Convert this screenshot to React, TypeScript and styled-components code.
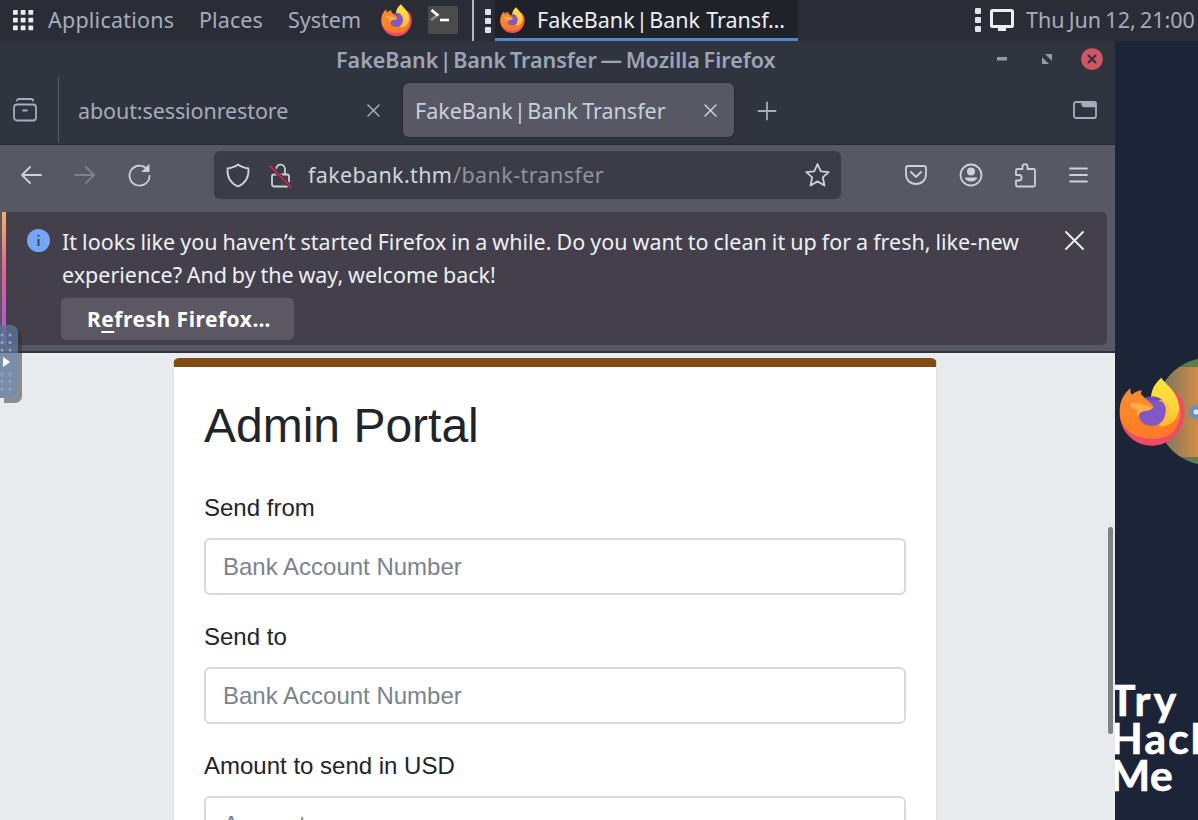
import React from "react";
import styled, { createGlobalStyle } from "styled-components";

const GlobalStyle = createGlobalStyle`
  * { box-sizing: border-box; }
  body { margin: 0; background: #1c2438; overflow: hidden; }
  svg { display: block; flex: none; overflow: visible; }
`;

const Screen = styled.div`
  width: 1198px;
  height: 820px;
  overflow: hidden;
  display: flex;
  flex-direction: column;
  position: relative;
  background: #1c2438;
  font-family: "Noto Sans", "Open Sans", sans-serif;
  font-size: 21.5px;
  color: #a4aebc;
`;

const Label = styled.span<{ $width: number; $spacing?: number; $word?: number }>`
  display: block;
  flex: none;
  width: ${(p) => p.$width}px;
  letter-spacing: ${(p) => p.$spacing ?? 0}px;
  word-spacing: ${(p) => p.$word ?? 0}px;
  line-height: 32px;
  white-space: pre;
`;

const Pipe = styled.span`
  word-spacing: -4.2px;
`;

/* ---------- Desktop panel ---------- */

const Panel = styled.header`
  height: 41px;
  flex: none;
  display: flex;
  align-items: center;
  background: #2b2d36;
  padding-left: 13px;
`;

const Menus = styled.nav`
  display: flex;
  gap: 25px;
  margin: -2px 0 0 15px;
`;

const Launchers = styled.div`
  display: flex;
  align-items: center;
  gap: 16px;
  margin-left: 21px;
`;

const Separator = styled.i`
  width: 2px;
  height: 41px;
  margin: 0 11px 0 14px;
  background: #b3b8c2;
`;

const Grip = styled.div`
  display: flex;
  flex-direction: column;
  gap: 3px;
  i { width: 6px; height: 6px; background: #dfe2e8; border-radius: 1px; }
`;

const TaskButton = styled.div`
  width: 303px;
  height: 41px;
  margin-left: 4px;
  padding: 2px 0 0 5px;
  display: flex;
  align-items: center;
  gap: 12px;
  background: #20222a;
  border-bottom: 3px solid #5088cc;
  color: #eceff3;
`;

const Tray = styled.div`
  margin: -1px 0 0 auto;
  display: flex;
  align-items: center;
  padding-right: 3px;
  svg { margin: 0 12px 0 9px; }
`;

/* ---------- Browser window ---------- */

const Workspace = styled.div`
  flex: 1;
  display: flex;
  min-height: 0;
`;

const Window = styled.section`
  width: 1115px;
  flex: none;
  display: flex;
  flex-direction: column;
  background: #30343f;
  position: relative;
  z-index: 1;
`;

const TitleBar = styled.div`
  height: 36px;
  flex: none;
  display: flex;
  align-items: center;
  padding: 2px 12px 0 336px;
  font-weight: 600;
  color: #9ba6b5;
`;

const WindowButtons = styled.div`
  margin: -2px 0 0 auto;
  display: flex;
  align-items: center;
`;

const TabStrip = styled.div`
  height: 68px;
  flex: none;
  display: flex;
  align-items: center;
  padding: 0 18px 1px 0;
  border-bottom: 1px solid #282b34;
`;

const TabMenu = styled.div`
  width: 59px;
  height: 66px;
  padding-left: 13px;
  display: flex;
  align-items: center;
  border-right: 1px solid #555964;
`;

const Tab = styled.div<{ $active?: boolean }>`
  height: 54px;
  width: ${(p) => (p.$active ? 331 : 336)}px;
  margin-left: ${(p) => (p.$active ? 2 : 6)}px;
  padding: 1px ${(p) => (p.$active ? 17 : 21)}px 0 ${(p) => (p.$active ? 12 : 13)}px;
  display: flex;
  align-items: center;
  justify-content: space-between;
  border-radius: 6px;
  background: ${(p) => (p.$active ? "#575864" : "transparent")};
  color: ${(p) => (p.$active ? "#c7d0dd" : "#a3adbb")};
  box-shadow: ${(p) => (p.$active ? "0 0 3px rgba(15,17,24,.45)" : "none")};
`;

const NewTab = styled.div`
  margin: 1px auto 0 24px;
`;

const NavBar = styled.div`
  height: 67px;
  flex: none;
  display: flex;
  align-items: center;
  padding: 0 27px 7px 20px;
  background: #575864;
  color: #ccd0d9;
`;

const NavButtons = styled.div`
  display: flex;
  align-items: center;
  gap: 32px;
`;

const AddressBar = styled.div`
  width: 627px;
  height: 48px;
  margin: 0 64px 0 63px;
  padding: 0 11px 0 12px;
  display: flex;
  align-items: center;
  border-radius: 6px;
  background: #3a3d46;
`;

const Url = styled.div`
  display: flex;
  margin: 0 auto 0 17px;
  color: #d0d5dc;
  span + span { color: #8f939b; }
`;

const NoticeArea = styled.div`
  height: 141px;
  flex: none;
  display: flex;
  padding: 0 8px 6px 2px;
  background: #575864;
  border-bottom: 2px solid #30333e;
`;

const Accent = styled.i`
  width: 4px;
  background: linear-gradient(#f5b25c, #e85f92 45%, #b455d8 90%);
`;

const Notice = styled.div`
  flex: 1;
  display: flex;
  align-items: flex-start;
  padding: 13px 23px 0 21px;
  border-radius: 0 5px 5px 0;
  background: #43404b;
  color: #edf0f3;
`;

const NoticeBody = styled.div`
  flex: 1;
  margin-left: 12px;
  ${Label} { line-height: 33px; }
`;

const RefreshButton = styled.button`
  display: block;
  width: 233px;
  height: 42px;
  margin: 7px 0 0 -1px;
  padding: 1px 0 0 26px;
  border: 0;
  border-radius: 5px;
  background: #5b5863;
  color: #fff;
  font: 700 21px "Noto Sans", sans-serif;
  text-align: left;
  u { text-decoration-thickness: 2px; text-underline-offset: 4px; }
`;

/* ---------- Bank page ---------- */

const Page = styled.main`
  flex: 1;
  min-height: 0;
  padding: 5px 0 0 173px;
  background: #e8ebee;
  overflow: hidden;
  position: relative;
`;

const Card = styled.section`
  width: 764px;
  height: 600px;
  padding: 0 30px;
  border: 1px solid #dddfe2;
  border-top: 9px solid #834b14;
  border-radius: 6px;
  background: #fff;
  font-family: "Liberation Sans", Arial, sans-serif;
  color: #212529;
`;

const Heading = styled.h1`
  margin: 30px 0 0;
  font-size: 48px;
  font-weight: 400;
  line-height: 58px;
`;

const Form = styled.form`
  margin-top: 35px;
  display: flex;
  flex-direction: column;
  gap: 24px;
`;

const Field = styled.label`
  display: flex;
  flex-direction: column;
  font-size: 24px;
  line-height: 36px;
  gap: 12px;
`;

const Input = styled.input`
  height: 57px;
  padding: 0 17px;
  border: 2px solid #d6dade;
  border-radius: 6px;
  background: #fff;
  font: 24px "Liberation Sans", Arial, sans-serif;
  &::placeholder { color: #7b838b; opacity: 1; }
`;

const ScrollThumb = styled.i`
  position: absolute;
  left: 1108px;
  top: 174px;
  width: 5px;
  height: 207px;
  border-radius: 3px;
  background: #7f8384;
`;

const SideHandle = styled.div`
  position: absolute;
  z-index: 3;
  left: 0;
  top: 325px;
  width: 18px;
  height: 73px;
  border-radius: 0 7px 7px 0;
  background: rgba(91, 115, 150, 0.78);
  box-shadow: 4px 5px 0 rgba(45, 45, 48, 0.5);
`;

/* ---------- Wallpaper ---------- */

const Desktop = styled.aside`
  flex: 1;
  position: relative;
`;

const Emblem = styled.div<{ $top: number }>`
  position: absolute;
  left: 4px;
  top: ${(p) => p.$top}px;
`;

const Wordmark = styled.div`
  position: absolute;
  left: -5px;
  top: 640px;
  font: 700 42.5px/37.5px "Lato", sans-serif;
  -webkit-text-stroke: 0.7px #fff;
  color: #fff;
`;

const WordLine = styled.div<{ $spacing: number }>`
  letter-spacing: ${(p) => p.$spacing}px;
  white-space: pre;
`;

function Firefox({ size }: { size: number }) {
  const id = `ff${size}`;
  return (
    <svg width={size} height={size * 1.05} viewBox="0 0 200 210">
      <defs>
        <linearGradient id={`${id}a`} x1="0" y1="0" x2="0.3" y2="1">
          <stop offset="0" stopColor="#f58a3c" />
          <stop offset=".6" stopColor="#ff8420" />
          <stop offset="1" stopColor="#ff7a26" />
        </linearGradient>
        <linearGradient id={`${id}b`} x1="0" y1="0" x2="0" y2="1">
          <stop offset="0" stopColor="#fbe33c" />
          <stop offset=".6" stopColor="#fdd53a" />
          <stop offset="1" stopColor="#ffb52d" />
        </linearGradient>
      </defs>
      <path d="M170 45C190 55 200 85 198 110C195 165 155 208 100 208C45 208 5 165 2 115Z" fill="#ef4a67" />
      <path d="M35 33C33 44 35 48 39 54C48 46 57 41 69 40C65 49 66 57 70 64L170 60C192 90 190 125 172 155C155 180 128 188 96 187C40 185 4 155 2 107C1 74 14 51 35 33Z" fill={`url(#${id}a)`} />
      <path d="M128 2C145 25 182 50 182 92C181 129 158 151 124 150L96 70C98 33 111 18 128 2Z" fill={`url(#${id}b)`} />
      <path d="M64 80C76 60 115 50 133 73C149 95 142 130 122 142C100 155 69 147 60 122Z" fill="#8059c7" />
      <path d="M76 66C92 55 120 56 139 78C124 72 114 71 104 73Z" fill="#7249bc" />
      <path d="M118 70C145 78 153 105 139 130C157 112 157 88 143 77C135 70 126 69 118 70Z" fill="#ffbd42" />
      <path d="M64 50L100 83L104 91C94 106 80 99 69 106C61 109 59 118 61 126C49 115 46 96 46 88L42 60Z" fill="#ff8a2a" />
      <path d="M33 82C52 76 74 84 88 88C93 90 98 91 104 91C94 106 80 99 69 106C61 109 59 113 59 119C52 110 53 101 56 97C45 99 36 93 33 82Z" fill="#ffae4a" />
    </svg>
  );
}

function Close({ size, width = 1.5 }: { size: number; width?: number }) {
  return (
    <svg width={size} height={size} viewBox={`0 0 ${size} ${size}`} stroke="currentColor" strokeWidth={width} strokeLinecap="round">
      <path d={`M1 1L${size - 1} ${size - 1}M${size - 1} 1L1 ${size - 1}`} />
    </svg>
  );
}

const line = { fill: "none", stroke: "currentColor", strokeWidth: 1.8, strokeLinecap: "round", strokeLinejoin: "round" } as const;

const Dots = () => (
  <Grip><i /><i /><i /></Grip>
);

export default function App() {
  return (
    <Screen>
      <GlobalStyle />
      <Panel>
        <svg width="20" height="20" viewBox="0 0 20 20" fill="#e9ebee">
          {[0, 7.7, 15.4].map((y) => [0, 7.7, 15.4].map((x) => <rect key={`${x}-${y}`} x={x} y={y - 1} width="4.8" height="4.8" rx=".6" />))}
        </svg>
        <Menus>
          <Label $width={126} $spacing={0.22}>Applications</Label>
          <Label $width={64} $spacing={0.1}>Places</Label>
          <Label $width={72}>System</Label>
        </Menus>
        <Launchers>
          <Firefox size={31} />
          <svg width="30" height="28" viewBox="0 0 30 28">
            <rect width="30" height="28" rx="2" fill="#4b4b4b" />
            <path d="M3 14L11 8" stroke="#8d8d8d" strokeWidth="2.4" />
            <path d="M3.5 4L10 9.5" stroke="#fff" strokeWidth="2.8" />
            <path d="M12 14H21" stroke="#fff" strokeWidth="2.6" />
          </svg>
        </Launchers>
        <Separator />
        <Dots />
        <TaskButton>
          <Firefox size={25} />
          <Label $width={250} $word={0.5}>FakeBank<Pipe> | </Pipe>Bank Transf…</Label>
        </TaskButton>
        <Tray>
          <Dots />
          <svg width="24" height="22" viewBox="0 0 24 22">
            <rect x="1.5" y="1.5" width="21" height="16" rx="1" fill="none" stroke="#eceef0" strokeWidth="3" />
            <rect x="8" y="18" width="8" height="4" fill="#eceef0" />
          </svg>
          <Label $width={169} $word={-1.4}>Thu Jun 12, 21:00</Label>
        </Tray>
      </Panel>

      <Workspace>
        <Window>
          <TitleBar>
            <Label $width={440} $word={-1.9}>FakeBank<Pipe> | </Pipe>Bank Transfer — Mozilla Firefox</Label>
            <WindowButtons>
              <svg width="10" height="4" viewBox="0 0 10 4"><rect width="10" height="3.5" fill="#939aa6" /></svg>
              <svg width="10" height="10" viewBox="0 0 10 10" fill="#939aa6" style={{ margin: "0 29px 0 35px" }}>
                <path d="M3 0H10V7ZM0 3V10H7Z" />
              </svg>
              <svg width="22" height="22" viewBox="0 0 22 22">
                <circle cx="11" cy="11" r="10.8" fill="#d05661" />
                <path d="M7 7L15 15M15 7L7 15" stroke="#30343f" strokeWidth="2.4" />
              </svg>
            </WindowButtons>
          </TitleBar>

          <TabStrip>
            <TabMenu>
              <svg width="24" height="24" viewBox="0 0 24 24" {...line}>
                <path d="M4 2.500C4 1.500 5 1 6 1H18C19 1 20 1.500 20 2.500M10 12.500H14" />
                <rect x="1" y="6.5" width="22" height="16" rx="3" />
              </svg>
            </TabMenu>
            <Tab>
              <Label $width={210} $spacing={-0.1}>about:sessionrestore</Label>
              <Close size={13} />
            </Tab>
            <Tab $active>
              <Label $width={250} $word={-1.5}>FakeBank<Pipe> | </Pipe>Bank Transfer</Label>
              <Close size={13} />
            </Tab>
            <NewTab>
              <svg width="18" height="18" viewBox="0 0 18 18" {...line}><path d="M9 .5V17.5M.5 9H17.5" /></svg>
            </NewTab>
            <svg width="24" height="18" viewBox="0 0 24 18" {...line}>
              <rect x="1" y="1" width="22" height="16" rx="2" />
              <path d="M9 1H23V6H10L8.5 4Z" fill="currentColor" strokeWidth=".5" />
            </svg>
          </TabStrip>

          <NavBar>
            <NavButtons>
              <svg width="22" height="20" viewBox="0 0 22 20" {...line}><path d="M21 10H2M10 2L2 10L10 18" /></svg>
              <svg width="22" height="20" viewBox="0 0 22 20" {...line} stroke="#7e808b"><path d="M1 10H20M12 2L20 10L12 18" /></svg>
              <svg width="23" height="23" viewBox="0 0 23 23" {...line}>
                <path d="M18.5 4.5A10 10 0 1 0 21.5 12" />
                <path d="M21 1V7.5H14.5Z" fill="currentColor" strokeWidth="1" />
              </svg>
            </NavButtons>
            <AddressBar>
              <svg width="24" height="25" viewBox="0 0 24 25" {...line}>
                <path d="M12 1.500C15 4 18 4.800 22.500 5.500C23 13 20 20 12 23.500C4 20 1 13 1.500 5.500C6 4.800 9 4 12 1.500Z" />
              </svg>
              <svg width="22" height="25" viewBox="0 0 22 25" {...line} style={{ marginLeft: 19 }}>
                <rect x="3" y="11.5" width="17" height="12" rx="2" />
                <path d="M7 11V6.500C7 0 16 0 16 6.500V11" />
                <path d="M1.500 3L21 23" stroke="#3a3d46" strokeWidth="4" />
                <path d="M1 3L21.500 23.500" stroke="#c72345" strokeWidth="2.2" />
              </svg>
              <Url>
                <Label $width={145} $spacing={0.35}>fakebank.thm</Label>
                <Label $width={152} $spacing={0.42}>/bank-transfer</Label>
              </Url>
              <svg width="25" height="24" viewBox="0 0 25 24" {...line}>
                <path d="M12.500 1L15.800 8.300L23.700 9.100L17.800 14.400L19.500 22.500L12.500 18.400L5.500 22.500L7.200 14.400L1.300 9.100L9.200 8.300Z" />
              </svg>
            </AddressBar>
            <NavButtons>
              <svg width="22" height="20" viewBox="0 0 22 20" {...line}>
                <path d="M3 1H19C20.500 1 21 1.500 21 3V9C21 15 17 19 11 19S1 15 1 9V3C1 1.500 1.500 1 3 1ZM6 7L11 12L16 7" />
              </svg>
              <svg width="24" height="24" viewBox="0 0 24 24" {...line}>
                <circle cx="12" cy="12" r="10.5" />
                <circle cx="12" cy="8.5" r="4" fill="currentColor" stroke="none" />
                <path d="M5.500 14.500H18.500C17.500 17 15 18.500 12 18.500S6.500 17 5.500 14.500Z" fill="currentColor" stroke="none" />
              </svg>
              <svg width="21" height="25" viewBox="0 0 21 25" {...line}>
                <path d="M1 12V7.500C1 6.500 1.500 6 2.500 6H7.500V3.500C7.500 .2 12.500 .2 12.500 3.500V6H18.500C19.500 6 20 6.500 20 7.500V22C20 23 19.500 23.500 18.500 23.500H2.500C1.500 23.500 1 23 1 22V17.500H4C7.500 17.500 7.500 12 4 12Z" />
              </svg>
              <svg width="20" height="16" viewBox="0 0 20 16" {...line}><path d="M2 1.500H19M2 8H19M2 14.500H19" /></svg>
            </NavButtons>
          </NavBar>

          <NoticeArea>
            <Accent />
            <Notice>
              <svg width="23" height="23" viewBox="0 0 23 23" style={{ marginTop: 4 }}>
                <circle cx="11.5" cy="11.5" r="11.5" fill="#73a7f3" />
                <path d="M11.500 6V7.500M11.500 10V17" stroke="#43404b" strokeWidth="2" />
              </svg>
              <NoticeBody>
                <Label $width={960} $word={-0.55}>It looks like you haven’t started Firefox in a while. Do you want to clean it up for a fresh, like-new</Label>
                <Label $width={440} $word={-0.8}>experience? And by the way, welcome back!</Label>
                <RefreshButton>
                  <Label $width={190} $spacing={0.5}>R<u>e</u>fresh Firefox…</Label>
                </RefreshButton>
              </NoticeBody>
              <div style={{ marginTop: 6 }}><Close size={19} width={1.9} /></div>
            </Notice>
          </NoticeArea>

          <Page>
            <Card>
              <Heading>Admin Portal</Heading>
              <Form>
                <Field>Send from<Input placeholder="Bank Account Number" /></Field>
                <Field>Send to<Input placeholder="Bank Account Number" /></Field>
                <Field>Amount to send in USD<Input placeholder="Amount" /></Field>
              </Form>
            </Card>
            <ScrollThumb />
          </Page>
        </Window>

        <Desktop>
          <Emblem $top={310}>
            <svg width="79" height="120" viewBox="0 0 79 120">
              <defs>
                <linearGradient id="band"><stop offset="0" stopColor="#687365" /><stop offset=".5" stopColor="#9c8055" /><stop offset="1" stopColor="#d38a43" /></linearGradient>
                <clipPath id="disc"><circle cx="91" cy="60.5" r="54" /></clipPath>
                <radialGradient id="glow"><stop offset="0" stopColor="#4b97ed" /><stop offset=".5" stopColor="#5a92d0" /><stop offset="1" stopColor="#5a92d0" stopOpacity="0" /></radialGradient>
              </defs>
              <g clipPath="url(#disc)">
                <rect x="35" width="60" height="120" fill="#5d7e4c" />
                <rect x="37" y="16" width="42" height="90" fill="url(#band)" />
                <circle cx="77" cy="61" r="9" fill="url(#glow)" />
                <circle cx="77" cy="61" r="2.5" fill="#dcecff" />
              </g>
            </svg>
          </Emblem>
          <Emblem $top={336}><Firefox size={66} /></Emblem>
          <Wordmark>
            <WordLine $spacing={3.4}>Try</WordLine>
            <WordLine $spacing={2.2}>Hack</WordLine>
            <WordLine $spacing={0.4}>Me</WordLine>
          </Wordmark>
        </Desktop>
      </Workspace>

      <SideHandle>
        <svg width="18" height="73" viewBox="0 0 18 73">
          {[10, 17.5, 25, 49, 56.5, 64].map((y) => [2, 10].map((x) => <circle key={`${x}-${y}`} cx={x} cy={y} r="1.5" fill="#94a3b8" />))}
          <path d="M3 33Q3 32 4 32.500L10 37L4 41.500Q3 42 3 41Z" fill="#fff" />
        </svg>
      </SideHandle>
    </Screen>
  );
}
